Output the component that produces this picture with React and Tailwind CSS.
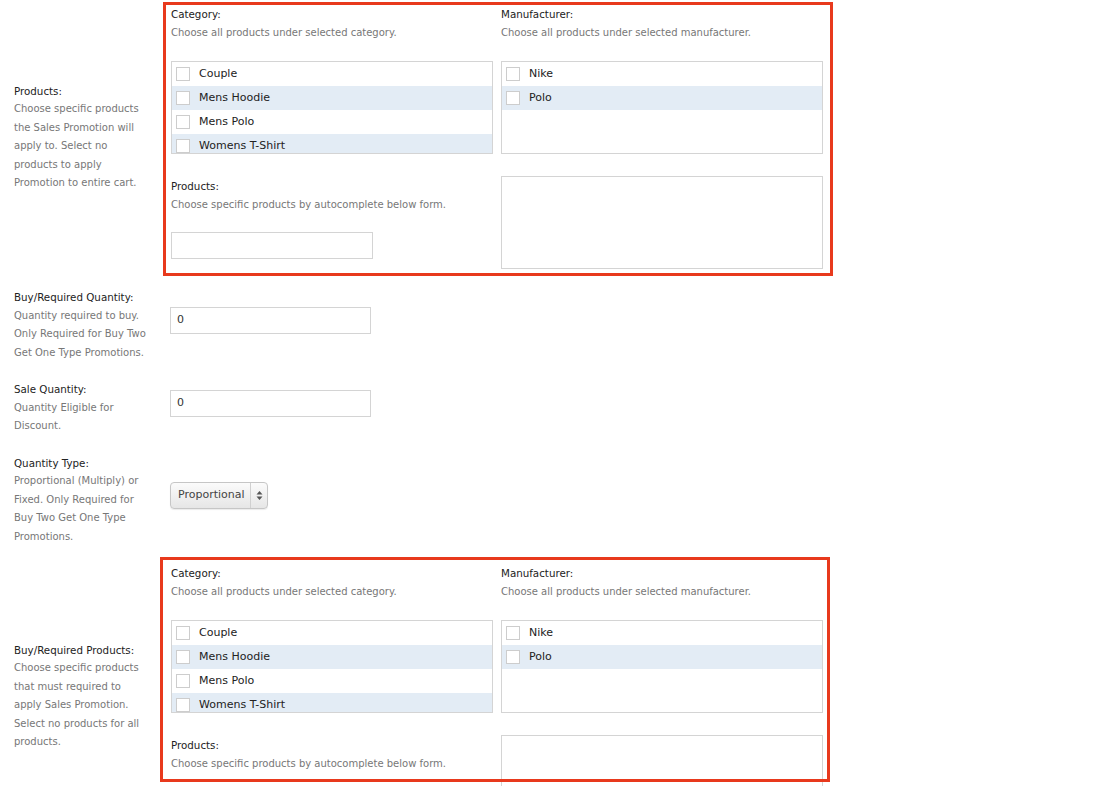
import React from 'react';

const categories = ['Couple', 'Mens Hoodie', 'Mens Polo', 'Womens T-Shirt'];
const manufacturers = ['Nike', 'Polo'];

function Label({ title, lines }) {
    return (
        <div className="w-[170px] shrink-0 pl-[14px] leading-[18.5px]">
            <div className="text-[10.3px] text-[#222]">{title}</div>
            {lines.map((l) => (
                <div key={l} className="text-[10px] text-[#777] whitespace-nowrap">{l}</div>
            ))}
        </div>
    );
}

function CheckList({ items }) {
    return (
        <div className="mt-[19px] h-[93px] overflow-hidden border border-[#d4d4d4] bg-white">
            {items.map((item, i) => (
                <div
                    key={item}
                    className={`flex h-[24px] items-center pl-[4px] ${i % 2 === 1 ? 'bg-[#e3ecf5]' : ''}`}
                >
                    <span className="h-[14px] w-[14px] border border-[#cdcdcd] bg-white" />
                    <span className="ml-[9px] text-[11px] text-[#222]">{item}</span>
                </div>
            ))}
        </div>
    );
}

function Heading({ title, desc }) {
    return (
        <div>
            <div className="h-[19px] text-[10.3px] leading-[19px] text-[#222]">{title}</div>
            <div className="h-[18px] text-[10px] leading-[18px] text-[#777]">{desc}</div>
        </div>
    );
}

// product picker block, red box is an annotation drawn over it
function ProductPicker({ box }) {
    return (
        <div className="relative w-[652px]">
            <div className="grid grid-cols-[322px_322px] gap-x-[8px]">
                <div>
                    <Heading title="Category:" desc="Choose all products under selected category." />
                    <CheckList items={categories} />
                </div>
                <div>
                    <Heading title="Manufacturer:" desc="Choose all products under selected manufacturer." />
                    <CheckList items={manufacturers} />
                </div>
                <div className="pt-[23px]">
                    <Heading title="Products:" desc="Choose specific products by autocomplete below form." />
                    <div className="mt-[18px] h-[27px] w-[202px] border border-[#d4d4d4] bg-white" />
                </div>
                <div className="pt-[22px]">
                    <div className="h-[93px] border border-[#d4d4d4] bg-white" />
                </div>
            </div>
            <div className={`pointer-events-none absolute border-[3px] border-[#e8391d] ${box}`} />
        </div>
    );
}

function TextInput() {
    return (
        <div className="mb-[9px] flex h-[27px] w-[201px] items-center border border-[#d4d4d4] bg-white pl-[6px] text-[11px] text-[#333]">
            0
        </div>
    );
}

export default function App() {
    return (
        <div className="min-h-[786px] w-[1100px] overflow-hidden bg-white pt-[5px] font-['DejaVu_Sans',sans-serif]">
            <div className="flex flex-col gap-[18px]">
                <div className="mb-[1px] flex items-center">
                    <Label
                        title="Products:"
                        lines={[
                            'Choose specific products',
                            'the Sales Promotion will',
                            'apply to. Select no',
                            'products to apply',
                            'Promotion to entire cart.',
                        ]}
                    />
                    <div className="pl-[1px]">
                        <ProductPicker box="-left-[8px] -top-[3px] h-[274px] w-[670px]" />
                    </div>
                </div>

                <div className="flex items-center">
                    <Label
                        title="Buy/Required Quantity:"
                        lines={['Quantity required to buy.', 'Only Required for Buy Two', 'Get One Type Promotions.']}
                    />
                    <TextInput />
                </div>

                <div className="flex items-center">
                    <Label title="Sale Quantity:" lines={['Quantity Eligible for', 'Discount.']} />
                    <TextInput />
                </div>

                <div className="flex items-center">
                    <Label
                        title="Quantity Type:"
                        lines={[
                            'Proportional (Multiply) or',
                            'Fixed. Only Required for',
                            'Buy Two Get One Type',
                            'Promotions.',
                        ]}
                    />
                    <div className="mb-[9px] flex h-[27px] w-[98px] items-center rounded-[4px] border border-[#c6c6c6] bg-gradient-to-b from-[#fbfbfb] to-[#e6e6e6] shadow-[0_1px_1px_rgba(0,0,0,0.08)]">
                        <span className="flex-1 pl-[7px] text-[11px] text-[#444]">Proportional</span>
                        <span className="flex h-full w-[17px] flex-col items-center justify-center border-l border-[#d0d0d0] text-[#555]">
                            <svg width="7" height="11" viewBox="0 0 7 11">
                                <path d="M3.5 1 L6.5 4.5 H0.5 Z M3.5 10 L6.5 6.5 H0.5 Z" fill="#555" />
                            </svg>
                        </span>
                    </div>
                </div>

                <div className="flex items-center">
                    <Label
                        title="Buy/Required Products:"
                        lines={[
                            'Choose specific products',
                            'that must required to',
                            'apply Sales Promotion.',
                            'Select no products for all',
                            'products.',
                        ]}
                    />
                    <div className="pl-[1px]">
                        <ProductPicker box="-left-[11px] -top-[7px] h-[225px] w-[670px]" />
                    </div>
                </div>
            </div>
        </div>
    );
}
